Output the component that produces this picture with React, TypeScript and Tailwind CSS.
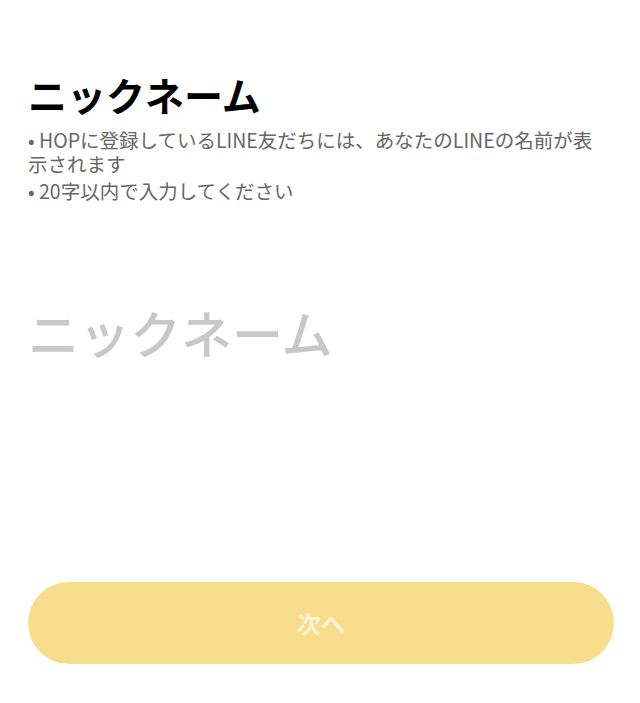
export default function App() {
  return (
    <div
      className="flex h-[703px] w-[640px] flex-col bg-white px-[28px]"
      style={{ fontFamily: '"Noto Sans CJK JP", "Noto Sans", sans-serif' }}
    >
      <h1 className="mt-[66px] text-[39px] font-bold leading-[56px] text-black">ニックネーム</h1>
      <ul className="mt-[6px] flex flex-col gap-[3px] pr-[10px] text-[19.5px] leading-[24px] text-[#666666]">
        <li>• HOPに登録しているLINE友だちには、あなたのLINEの名前が表示されます</li>
        <li>• 20字以内で入力してください</li>
      </ul>
      <input
        className="mt-[94px] w-full bg-transparent text-[51px] font-medium leading-[70px] text-black outline-none placeholder:text-[#c8c8c8]"
        placeholder="ニックネーム"
      />
      <div className="flex-1" />
      <button className="mb-[39px] h-[82px] w-[586px] rounded-full bg-[#f8dd8c] text-[24px] font-bold text-[#fdf3d6]">
        次へ
      </button>
    </div>
  );
}
